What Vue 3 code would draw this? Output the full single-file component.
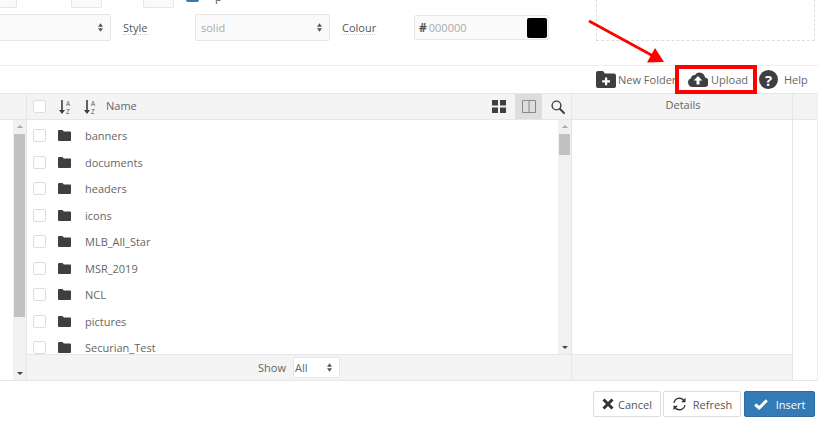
<script setup>
const folders = ['banners','documents','headers','icons','MLB_All_Star','MSR_2019','NCL','pictures','Securian_Test']
</script>

<template>
  <div class="page">
    <section class="top">
      <div class="forms">
        <div class="row one">
          <div class="field w-first"></div>
          <span class="lbl bottom">Bottom</span>
          <div class="field w-small"></div>
          <span class="lbl left">Left</span>
          <div class="field w-small"></div>
          <span class="tick"></span>
          <span class="lbl plabel">p</span>
        </div>
        <div class="row two">
          <div class="field select w-sel0">
            <svg class="updown" viewBox="0 0 6 10"><path d="M3 0l3 4H0zM3 10L0 6h6z" /></svg>
          </div>
          <span class="lbl dotted style">Style</span>
          <div class="field select w-sel">
            <span class="muted">solid</span>
            <svg class="updown" viewBox="0 0 6 10"><path d="M3 0l3 4H0zM3 10L0 6h6z" /></svg>
          </div>
          <span class="lbl dotted colour">Colour</span>
          <div class="field colourbox">
            <b class="hash">#</b><span class="muted">000000</span>
            <i class="swatch"></i>
          </div>
        </div>
      </div>
      <div class="drop"></div>
    </section>

    <nav class="tools">
      <span class="tool nf">
        <svg width="20" height="17" viewBox="0 0 20 17"><path fill="#3f3f3f" d="M0 2a2 2 0 0 1 2-2h5l2 2.500h9a2 2 0 0 1 2 2V15a2 2 0 0 1-2 2H2a2 2 0 0 1-2-2z"/><path fill="#fff" d="M9 6.500h2.200v2.800H14v2.200h-2.800v2.800H9v-2.800H6.200V9.300H9z"/></svg>
        New Folder
      </span>
      <span class="tool up">
        <svg width="20" height="15" viewBox="0 0 20 15"><path fill="#3f3f3f" d="M4.500 15A4.500 4.500 0 0 1 3 6.300 4 4 0 0 1 7 3a5.500 5.500 0 0 1 10 2.500A4.800 4.800 0 0 1 15.500 15z"/><path fill="#fff" d="M10 4l4.300 4.500h-2.800V12.500h-3V8.500H5.700z"/></svg>
        Upload
      </span>
      <span class="tool help">
        <span class="q">?</span>
        Help
      </span>
    </nav>

    <section class="browser">
      <aside class="tree">
        <div class="treehead"></div>
        <div class="treebody">
          <div class="bar tall">
            <i class="up-arrow"></i><i class="thumb t1"></i><i class="down-arrow"></i>
          </div>
        </div>
      </aside>

      <main class="files">
        <header class="head">
          <span class="check"></span>
          <svg class="sort s1" width="13" height="14" viewBox="0 0 13 14"><path fill="#3f3f3f" d="M2.200 0h1.600v10H6l-3 4-3-4h2.200z"/><text x="7" y="6" class="az">A</text><text x="7" y="13.500" class="az">Z</text></svg>
          <svg class="sort s2" width="13" height="14" viewBox="0 0 13 14"><path fill="#3f3f3f" d="M2.200 0h1.600v10H6l-3 4-3-4h2.200z"/><text x="7" y="6" class="az">A</text><text x="7" y="13.500" class="az">Z</text></svg>
          <span class="name">Name</span>
          <span class="grow"></span>
          <svg class="grid" width="14" height="13" viewBox="0 0 14 13"><path fill="#3f3f3f" d="M0 0h6v5.500H0zM8 0h6v5.500H8zM0 7.500h6V13H0zM8 7.500h6V13H8z"/></svg>
          <span class="split">
            <svg width="14" height="13" viewBox="0 0 14 13"><path fill="none" stroke="#888" d="M.5.500h13v12H.5zM7 .5v12"/></svg>
          </span>
          <svg class="search" width="14" height="14" viewBox="0 0 14 14"><circle cx="5.500" cy="5.500" r="4.400" fill="none" stroke="#3f3f3f" stroke-width="1.400"/><path stroke="#3f3f3f" stroke-width="2" stroke-linecap="round" d="M9 9l4 4"/></svg>
        </header>
        <div class="body">
          <ul class="list">
            <li v-for="f in folders" :key="f">
              <span class="check"></span>
              <svg class="folder" width="13" height="11" viewBox="0 0 13 11"><path fill="#3f3f3f" d="M0 1a1 1 0 0 1 1-1h3.500l1.300 1.500H12a1 1 0 0 1 1 1V10a1 1 0 0 1-1 1H1a1 1 0 0 1-1-1z"/></svg>
              <span class="fname">{{ f }}</span>
            </li>
          </ul>
          <div class="bar">
            <i class="up-arrow"></i><i class="thumb t2"></i><i class="down-arrow"></i>
          </div>
        </div>
        <footer class="foot">
          <span class="show">Show</span>
          <span class="all">All
            <svg class="updown" viewBox="0 0 6 10"><path d="M3 0l3 4H0zM3 10L0 6h6z" /></svg>
          </span>
        </footer>
      </main>

      <section class="details">
        <div class="dhead">Details</div>
        <div class="dbody"></div>
        <div class="dfoot"></div>
      </section>

      <aside class="rest">
        <div class="resthead"></div>
      </aside>
    </section>

    <footer class="actions">
      <button class="btn cancel">
        <svg width="12" height="12" viewBox="0 0 12 12"><path stroke="#333" stroke-width="3" d="M1.500 1.500l9 9M10.500 1.500l-9 9"/></svg>
        Cancel
      </button>
      <button class="btn refresh">
        <svg width="15" height="14" viewBox="0 0 15 14"><path fill="none" stroke="#333" stroke-width="1.300" d="M2 6a5.600 5.600 0 0 1 10-2.500M13 8a5.600 5.600 0 0 1-10 2.500"/><path fill="#333" d="M13.500.8v4.400H9.100zM1.500 13.200V8.800h4.400z"/></svg>
        Refresh
      </button>
      <button class="btn insert">
        <svg width="14" height="11" viewBox="0 0 14 11"><path fill="none" stroke="#fff" stroke-width="3" d="M1.200 5.500l4 3.500L12.800 1.200"/></svg>
        Insert
      </button>
    </footer>

    <svg class="arrow" width="90" height="50" viewBox="0 0 90 50">
      <path stroke="#f00" stroke-width="2.600" d="M2 2L68 38"/>
      <path fill="#f00" d="M77 43L60 43.500 68 29z"/>
    </svg>
    <div class="redbox"></div>
  </div>
</template>

<style scoped>
.page {
  position: relative;
  width: 822px;
  height: 423px;
  overflow: hidden;
  background: #fff;
  display: flex;
  flex-direction: column;
  font-family: "Open Sans", "Liberation Sans", sans-serif;
  font-size: 11px;
  color: #666;
}
.top {
  flex: 0 0 66px;
  box-sizing: border-box;
  display: flex;
  border-bottom: 1px solid #eee;
  margin-right: 4px;
}
.forms { flex: 1; }
.row { display: flex; align-items: center; }
.row.one { height: 28px; margin-top: -20px; }
.row.two { height: 27px; margin-top: 6px; }
.lbl { white-space: nowrap; color: #555; }
.field {
  box-sizing: border-box;
  height: 100%;
  background: #fafafa;
  border: 1px solid #e6e6e6;
  border-radius: 2px;
  position: relative;
  display: flex;
  align-items: center;
}
.w-first { width: 38px; margin-left: -21px; }
.bottom { margin-left: 9px; width: 36px; }
.w-small { width: 31px; margin-left: 9px; }
.left { margin-left: 8px; width: 24px; }
.tick {
  width: 13px; height: 13px; margin: 3px 16px 0 12px;
  background: #337ab7; border-radius: 2px;
}
.plabel { margin-top: 4px; }
.w-sel0 { width: 131px; margin-left: -20px; }
.style, .colour { line-height: 13px; border-bottom: 1px dotted #ccc; }
.w-sel { width: 135px; padding-left: 5px; }
.colour { margin-left: 12px; width: 33px; margin-right: 39px; }
.style { margin-left: 12px; width: 26px; margin-right: 46px; }
.colourbox { width: 135px; padding-left: 4px; margin-left: 0; height: 25px; }
.muted { color: #aaa; }
.hash { font-size: 12px; color: #555; margin-right: 2px; }
.swatch {
  width: 20px; height: 20px; background: #000; border-radius: 2px;
  position: absolute; right: 1px; top: 2px;
}
.updown {
  width: 5px; height: 9px; fill: #555;
  position: absolute; right: 7px; top: 50%; margin-top: -5px;
}
.drop {
  box-sizing: border-box;
  width: 219px;
  height: 51px;
  margin: -10px 3px 0 0;
  border: 1px dashed #ddd;
}
.tools {
  flex: 0 0 27px;
  display: flex;
  align-items: center;
  justify-content: flex-end;
  padding-right: 15px;
}
.tool { display: flex; align-items: center; white-space: nowrap; }
.tool svg, .q { flex: none; }
.nf svg { margin-right: 2px; }
.nf { width: 79px; }
.up { margin-left: 13px; width: 58px; }
.up svg { margin-right: 3px; }
.help { margin-left: 13px; width: 48px; }
.q {
  width: 19px; height: 19px; border-radius: 50%;
  background: #3f3f3f; color: #fff; font-weight: 700; font-size: 15px;
  display: flex; align-items: center; justify-content: center; margin-right: 6px;
}
.browser {
  flex: 0 0 288px;
  height: 288px;
  min-height: 0;
  box-sizing: border-box;
  width: 818px;
  display: flex;
  border-top: 1px solid #e6e6e6;
  border-bottom: 1px solid #e6e6e6;
  border-right: 1px solid #eee;
}
.tree {
  flex: 0 0 27px;
  box-sizing: border-box;
  display: flex;
  flex-direction: column;
  border-right: 1px solid #e6e6e6;
}
.treehead { flex: 0 0 26px; background: #f4f4f4; border-bottom: 1px solid #e6e6e6; box-sizing: border-box; }
.treebody { flex: 1; display: flex; justify-content: flex-end; }
.bar {
  flex: 0 0 13px;
  width: 13px;
  background: #f1f1f1;
  display: flex;
  flex-direction: column;
  align-items: center;
}
.up-arrow {
  margin-top: 5px;
  border: 3px solid transparent;
  border-top: 0;
  border-bottom: 3px solid #aaa;
}
.down-arrow {
  margin-top: auto;
  margin-bottom: 5px;
  border: 3px solid transparent;
  border-bottom: 0;
  border-top: 3px solid #444;
}
.thumb { width: 11px; background: #c1c1c1; margin-top: 6px; }
.t1 { height: 183px; }
.t2 { height: 21px; }
.files { flex: 0 0 545px; box-sizing: border-box; display: flex; flex-direction: column; min-width: 0; min-height: 0; border-right: 1px solid #e6e6e6; }
.head {
  flex: 0 0 26px;
  box-sizing: border-box;
  display: flex;
  align-items: center;
  background: #f4f4f4;
  border-bottom: 1px solid #e6e6e6;
}
.check {
  box-sizing: border-box;
  flex: 0 0 13px;
  width: 13px;
  height: 13px;
  background: #fff;
  border: 1px solid #ddd;
  border-radius: 2px;
}
.head > .check { margin-left: 6px; }
.s1 { margin-left: 13px; }
.s2 { margin-left: 12px; }
.az { font-size: 6.500px; fill: #555; font-family: "Open Sans", sans-serif; }
.name { margin: -2px 0 0 9px; }
.grow { flex: 1; }
.grid { margin-top: -1px; }
.split {
  width: 27px; height: 25px; background: #ddd;
  display: flex; align-items: center; justify-content: center;
  margin-left: 9px; margin-right: 9px;
}
.search { margin-right: 6px; }
.body { flex: 1; min-height: 0; display: flex; overflow: hidden; }
.list { flex: 1; margin: 0; padding: 2.500px 0 0 6px; list-style: none; }
li {
  height: 26.500px;
  display: flex;
  align-items: center;
}
.folder { margin-left: 12px; }
.fname { margin-left: 14px; }
.foot {
  flex: 0 0 26px;
  box-sizing: border-box;
  display: flex;
  align-items: center;
  justify-content: center;
  gap: 7px;
  background: #f4f4f4;
  border-top: 1px solid #e6e6e6;
}
.all {
  box-sizing: border-box;
  position: relative;
  width: 47px;
  height: 21px;
  padding-left: 1px;
  line-height: 19px;
  background: #fff;
  border: 1px solid #e6e6e6;
  border-radius: 2px;
}
.details { flex: 0 0 221px; box-sizing: border-box; display: flex; flex-direction: column; border-right: 1px solid #e6e6e6; }
.dhead {
  flex: 0 0 26px;
  box-sizing: border-box;
  line-height: 22px;
  padding-left: 2px;
  text-align: center;
  background: #f4f4f4;
  border-bottom: 1px solid #e6e6e6;
}
.dbody { flex: 1; }
.dfoot { flex: 0 0 26px; box-sizing: border-box; background: #f4f4f4; border-top: 1px solid #e6e6e6; }
.rest { flex: 1; }
.resthead { height: 26px; box-sizing: border-box; background: #f4f4f4; border-bottom: 1px solid #e6e6e6; }
.actions {
  flex: 1;
  display: flex;
  justify-content: flex-end;
  gap: 2px;
  padding: 10px 7px 0 0;
  box-sizing: border-box;
  width: 822px;
}
.btn {
  box-sizing: border-box;
  height: 26px;
  padding: 0;
  display: flex;
  align-items: center;
  justify-content: center;
  gap: 4px;
  font: inherit;
  color: #555;
  background: #fff;
  border: 1px solid #ddd;
  border-radius: 2px;
}
.cancel { width: 68px; }
.refresh { width: 78px; gap: 6px; }
.insert { width: 71px; margin-left: 1px; background: #337ab7; border-color: #2e6da4; color: #fff; gap: 8px; }
.arrow { position: absolute; left: 587px; top: 19px; pointer-events: none; }
.redbox {
  position: absolute;
  left: 675px; top: 65px;
  width: 82px; height: 29px;
  box-sizing: border-box;
  border: 4px solid #f00;
}
</style>
